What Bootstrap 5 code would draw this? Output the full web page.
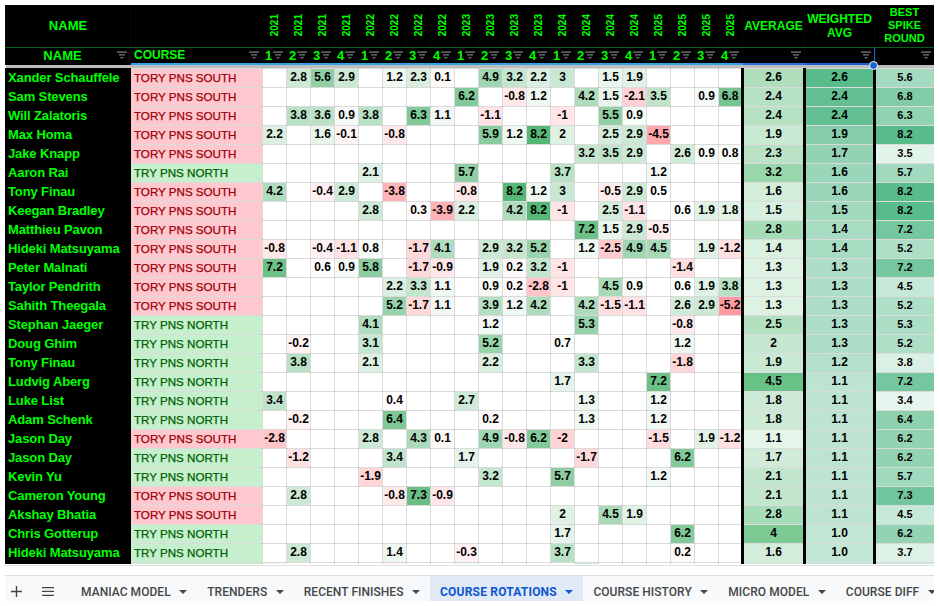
<!doctype html>
<html lang="en">
<head>
    <meta charset="utf-8" />
    <meta content="width=device-width, initial-scale=1" name="viewport" />
    <title>COURSE ROTATIONS</title>
    <link href="https://cdn.jsdelivr.net/npm/bootstrap@5.3.6/dist/css/bootstrap.min.css" rel="stylesheet" />
    <script src="https://cdn.jsdelivr.net/npm/bootstrap@5.3.6/dist/js/bootstrap.bundle.min.js"></script>
    <style>
        body {
            background-color: #fff;
            padding: 5px 5px 0;
            overflow: hidden;
            font-family: "Liberation Sans", Arial, sans-serif;
        }

        .sheet-wrap {
            width: 929px;
            height: 559px;
            overflow: hidden;
        }

        .sheet {
            width: 929px;
            table-layout: fixed;
            margin: 0;
        }

        .sheet > :not(caption) > * > * {
            padding: 0;
            box-shadow: none;
            background-color: transparent;
            color: #000;
            border: 1px solid #e0e0e0;
            text-align: center;
            vertical-align: middle;
            overflow: hidden;
            white-space: nowrap;
        }

        .sheet > thead > tr > * {
            background-color: #000;
            color: #0f0;
            font-weight: 700;
            border-color: #080808;
        }

        .sheet > thead > .head-top > * {
            height: 42px;
            font-size: 13px;
            line-height: 13px;
            border-top: 0;
            border-bottom: 1px solid #0a5c1e;
        }

        .sheet > thead > .head-top > .head-stat {
            font-size: 12px;
            line-height: 14px;
        }

        .sheet > thead > .head-top > .head-best {
            font-size: 11px;
            line-height: 13px;
        }

        .year-label {
            display: inline-block;
            writing-mode: vertical-rl;
            transform: rotate(180deg);
            font-size: 10px;
            line-height: 12px;
        }

        .sheet > thead > .head-filters > * {
            height: 17px;
            font-size: 13px;
            line-height: 15px;
            border-top-color: #0a5c1e;
            border-bottom: 2px solid #000;
        }

        .sheet > thead > .head-filters > .sel-line {
            border-bottom-color: #33a3e3;
        }

        .sheet > thead > .head-filters > .sel-avg {
            border-bottom-color: #2a72e0;
        }

        .sheet > thead > .head-filters > .sel-box {
            border: 1px solid #1a62d6;
            border-bottom-width: 2px;
        }

        .filter-cell {
            display: flex;
            align-items: center;
            justify-content: space-between;
            padding: 0 3px 0 2px;
        }

        .filter-name {
            flex-grow: 1;
            text-align: center;
        }

        .filter-course {
            font-size: 12px;
            padding-left: 1px;
        }

        .filter-icon {
            width: 10px;
            height: 8px;
            flex-shrink: 0;
            fill: #6f6f6f;
        }

        .sheet > thead > .freeze-bar > td {
            height: 4px;
            background-color: #bdbdbd;
            border: 0;
            line-height: 0;
            font-size: 0;
        }

        .sheet > tbody > tr > td {
            height: 19px;
            font-size: 12px;
            font-weight: 700;
            line-height: 17px;
            border-color: rgba(0, 0, 0, .14);
        }

        .sheet > tbody > tr > .player-name {
            background-color: #000;
            color: #0f0;
            font-size: 13px;
            letter-spacing: -.12px;
            text-align: left;
            padding-left: 2px;
            border-color: #000;
        }

        .sheet > tbody > tr > .course-south,
        .sheet > tbody > tr > .course-north {
            font-size: 11.6px;
            font-weight: 400;
            line-height: 18px;
            -webkit-text-stroke: .25px currentColor;
            text-align: left;
            padding: 0 0 0 3px;
        }

        .sheet > tbody > tr > .course-south {
            background-color: #ffc7ce;
            color: #9c0006;
        }

        .sheet > tbody > tr > .course-north {
            background-color: #c6efce;
            color: #006100;
        }

        .sheet > tbody > tr > .stat-left {
            border-left: 3px solid #000;
        }

        .sheet > tbody > tr > .stat-last {
            border-left: 3px solid #000;
            font-size: 11px;
        }

        .fill-handle {
            position: absolute;
            left: 864px;
            top: 56px;
            width: 9px;
            height: 9px;
            background-color: #1a62d6;
            border: 1px solid #fff;
            border-radius: 50%;
        }

        .sheet-line {
            width: 929px;
            height: 1px;
            background-color: #e0e0e0;
            margin-top: 1px;
        }

        .sheet-tabs {
            width: 929px;
            height: 26px;
            margin-top: 9px;
            background-color: #f8f9fa;
            border-top: 1px solid #dadce0;
            overflow: hidden;
            font-family: Roboto, "Liberation Sans", sans-serif;
            font-size: 12px;
            font-weight: 500;
            letter-spacing: .05px;
            color: #444746;
        }

        .tab-tool {
            flex-shrink: 0;
            width: 22px;
            padding-top: 6px;
            fill: #444746;
        }

        .tab-tool + .tab-tool {
            width: 32px;
            margin: 0 7px 0 5px;
        }

        .sheet-tab {
            padding: 6px 10px 0;
            flex-shrink: 0;
            gap: 8.5px;
        }

        .sheet-tab.is-active {
            background-color: #e1e9f7;
            color: #0b57d0;
            font-weight: 700;
            letter-spacing: .2px;
        }

        .tab-caret {
            width: 0;
            height: 0;
            border-left: 4px solid transparent;
            border-right: 4px solid transparent;
            border-top: 4px solid currentColor;
        }
    </style>
</head>
<body>

<svg class="d-none">
    <symbol id="flt" viewBox="0 0 10 8">
        <rect height="1.4" width="10" x="0" y="0.4"></rect>
        <rect height="1.4" width="6" x="2" y="3.2"></rect>
        <rect height="1.4" width="3" x="3.5" y="6"></rect>
    </symbol>
</svg>

<div class="position-relative">
    <div class="sheet-wrap">
        <table class="table sheet">
            <colgroup id="sheetCols"></colgroup>
            <thead id="sheetHead"></thead>
            <tbody id="sheetRows"></tbody>
        </table>
    </div>
    <div class="fill-handle"></div>
</div>

<div class="sheet-line"></div>

<div class="sheet-tabs d-flex align-items-stretch">
    <div class="tab-tool d-flex align-items-center justify-content-center">
        <svg height="11" viewBox="0 0 11 11" width="11"><path d="M4.8 0h1.4v4.8H11v1.4H6.2V11H4.8V6.2H0V4.8h4.8z"></path></svg>
    </div>
    <div class="tab-tool d-flex align-items-center justify-content-center">
        <svg height="9" viewBox="0 0 12 9" width="12"><path d="M0 0h12v1.3H0zM0 3.8h12v1.3H0zM0 7.7h12V9H0z"></path></svg>
    </div>
    <div class="d-flex align-items-stretch" id="sheetTabs"></div>
</div>

<script>
    // [name, course, {round column: value}, average, weighted, best spike]
    const S = "TORY PNS SOUTH", N = "TRY PNS NORTH";
    const players = [
        ["Xander Schauffele", S, {2: 2.8, 3: 5.6, 4: 2.9, 6: 1.2, 7: 2.3, 8: 0.1, 10: 4.9, 11: 3.2, 12: 2.2, 13: 3, 15: 1.5, 16: 1.9}, 2.6, "2.6", 5.6],
        ["Sam Stevens", S, {9: 6.2, 11: -0.8, 12: 1.2, 14: 4.2, 15: 1.5, 16: -2.1, 17: 3.5, 19: 0.9, 20: 6.8}, 2.4, "2.4", 6.8],
        ["Will Zalatoris", S, {2: 3.8, 3: 3.6, 4: 0.9, 5: 3.8, 7: 6.3, 8: 1.1, 10: -1.1, 13: -1, 15: 5.5, 16: 0.9}, 2.4, "2.4", 6.3],
        ["Max Homa", S, {1: 2.2, 3: 1.6, 4: -0.1, 6: -0.8, 10: 5.9, 11: 1.2, 12: 8.2, 13: 2, 15: 2.5, 16: 2.9, 17: -4.5}, 1.9, "1.9", 8.2],
        ["Jake Knapp", S, {14: 3.2, 15: 3.5, 16: 2.9, 18: 2.6, 19: 0.9, 20: 0.8}, 2.3, "1.7", 3.5],
        ["Aaron Rai", N, {5: 2.1, 9: 5.7, 13: 3.7, 17: 1.2}, 3.2, "1.6", 5.7],
        ["Tony Finau", S, {1: 4.2, 3: -0.4, 4: 2.9, 6: -3.8, 9: -0.8, 11: 8.2, 12: 1.2, 13: 3, 15: -0.5, 16: 2.9, 17: 0.5}, 1.6, "1.6", 8.2],
        ["Keegan Bradley", S, {5: 2.8, 7: 0.3, 8: -3.9, 9: 2.2, 11: 4.2, 12: 8.2, 13: -1, 15: 2.5, 16: -1.1, 18: 0.6, 19: 1.9, 20: 1.8}, 1.5, "1.5", 8.2],
        ["Matthieu Pavon", S, {14: 7.2, 15: 1.5, 16: 2.9, 17: -0.5}, 2.8, "1.4", 7.2],
        ["Hideki Matsuyama", S, {1: -0.8, 3: -0.4, 4: -1.1, 5: 0.8, 7: -1.7, 8: 4.1, 10: 2.9, 11: 3.2, 12: 5.2, 14: 1.2, 15: -2.5, 16: 4.9, 17: 4.5, 19: 1.9, 20: -1.2}, 1.4, "1.4", 5.2],
        ["Peter Malnati", S, {1: 7.2, 3: 0.6, 4: 0.9, 5: 5.8, 7: -1.7, 8: -0.9, 10: 1.9, 11: 0.2, 12: 3.2, 13: -1, 18: -1.4}, 1.3, "1.3", 7.2],
        ["Taylor Pendrith", S, {6: 2.2, 7: 3.3, 8: 1.1, 10: 0.9, 11: 0.2, 12: -2.8, 13: -1, 15: 4.5, 16: 0.9, 18: 0.6, 19: 1.9, 20: 3.8}, 1.3, "1.3", 4.5],
        ["Sahith Theegala", S, {6: 5.2, 7: -1.7, 8: 1.1, 10: 3.9, 11: 1.2, 12: 4.2, 14: 4.2, 15: -1.5, 16: -1.1, 18: 2.6, 19: 2.9, 20: -5.2}, 1.3, "1.3", 5.2],
        ["Stephan Jaeger", N, {5: 4.1, 10: 1.2, 14: 5.3, 18: -0.8}, 2.5, "1.3", 5.3],
        ["Doug Ghim", N, {2: -0.2, 5: 3.1, 10: 5.2, 13: 0.7, 18: 1.2}, 2, "1.3", 5.2],
        ["Tony Finau", N, {2: 3.8, 5: 2.1, 10: 2.2, 14: 3.3, 18: -1.8}, 1.9, "1.2", 3.8],
        ["Ludvig Aberg", N, {13: 1.7, 17: 7.2}, 4.5, "1.1", 7.2],
        ["Luke List", N, {1: 3.4, 6: 0.4, 9: 2.7, 14: 1.3, 17: 1.2}, 1.8, "1.1", 3.4],
        ["Adam Schenk", N, {2: -0.2, 6: 6.4, 10: 0.2, 14: 1.3, 17: 1.2}, 1.8, "1.1", 6.4],
        ["Jason Day", S, {1: -2.8, 5: 2.8, 7: 4.3, 8: 0.1, 10: 4.9, 11: -0.8, 12: 6.2, 13: -2, 17: -1.5, 19: 1.9, 20: -1.2}, 1.1, "1.1", 6.2],
        ["Jason Day", N, {2: -1.2, 6: 3.4, 9: 1.7, 14: -1.7, 18: 6.2}, 1.7, "1.1", 6.2],
        ["Kevin Yu", N, {5: -1.9, 10: 3.2, 13: 5.7, 17: 1.2}, 2.1, "1.1", 5.7],
        ["Cameron Young", S, {2: 2.8, 6: -0.8, 7: 7.3, 8: -0.9}, 2.1, "1.1", 7.3],
        ["Akshay Bhatia", S, {13: 2, 15: 4.5, 16: 1.9}, 2.8, "1.1", 4.5],
        ["Chris Gotterup", N, {13: 1.7, 18: 6.2}, 4, "1.0", 6.2],
        ["Hideki Matsuyama", N, {2: 2.8, 6: 1.4, 9: -0.3, 13: 3.7, 18: 0.2}, 1.6, "1.0", 3.7]
    ];

    function mix(to, t) {
        t = Math.max(0, Math.min(1, t));
        const c = to.map(v => Math.round(255 + (v - 255) * t));
        return `rgb(${c[0]},${c[1]},${c[2]})`;
    }

    const GREEN = [87, 187, 138];
    const roundColor = v => v >= 0.5 ? mix([87, 183, 118], (v - 0.5) / 7.7) : mix([255, 155, 160], (0.5 - v) / 5.7);
    const avgColor = v => mix([87, 187, 118], (v - 0.4) / 4.6);
    const weightedColor = v => mix(GREEN, 0.36 + (v - 1) / 1.6 * 0.64);
    const bestColor = v => mix(GREEN, 0.15 + (v - 3.4) / 4.8 * 0.85);

    const years = [2021, 2022, 2023, 2024, 2025];
    const icon = '<svg class="filter-icon"><use href="#flt"></use></svg>';

    // columns
    let cols = '<col style="width:125px"><col style="width:132px">';
    for (let i = 0; i < 20; i++) cols += '<col style="width:24px">';
    cols += '<col style="width:62px"><col style="width:70px"><col style="width:60px">';
    document.getElementById("sheetCols").innerHTML = cols;

    // header rows
    let topRow = '<th>NAME</th><th></th>';
    let filterRow = `<th><div class="filter-cell"><span class="filter-name">NAME</span>${icon}</div></th>` +
        `<th class="sel-line"><div class="filter-cell"><span class="filter-course">COURSE</span>${icon}</div></th>`;
    years.forEach(y => {
        for (let r = 1; r <= 4; r++) {
            topRow += `<th><span class="year-label">${y}</span></th>`;
            filterRow += `<th class="sel-line"><div class="filter-cell"><span>${r}</span>${icon}</div></th>`;
        }
    });
    topRow += '<th class="head-stat">AVERAGE</th><th class="head-stat">WEIGHTED<br>AVG</th><th class="head-best">BEST<br>SPIKE<br>ROUND</th>';
    filterRow += `<th class="sel-avg"><div class="filter-cell justify-content-end">${icon}</div></th>` +
        `<th class="sel-box"><div class="filter-cell justify-content-end">${icon}</div></th>` +
        `<th><div class="filter-cell justify-content-end">${icon}</div></th>`;
    document.getElementById("sheetHead").innerHTML =
        `<tr class="head-top">${topRow}</tr><tr class="head-filters">${filterRow}</tr>` +
        '<tr class="freeze-bar"><td colspan="25"></td></tr>';

    // player rows
    let rowsHtml = players.map(([name, course, rounds, avg, weighted, best]) => {
        let cells = `<td class="player-name">${name}</td>` +
            `<td class="${course === S ? "course-south" : "course-north"}">${course}</td>`;
        for (let c = 1; c <= 20; c++) {
            const v = rounds[c];
            cells += v === undefined ? "<td></td>" : `<td style="background-color:${roundColor(v)}">${v}</td>`;
        }
        cells += `<td class="stat-left" style="background-color:${avgColor(avg)}">${avg}</td>`;
        cells += `<td class="stat-left" style="background-color:${weightedColor(+weighted)}">${weighted}</td>`;
        cells += `<td class="stat-last" style="background-color:${bestColor(best)}">${best}</td>`;
        return `<tr>${cells}</tr>`;
    }).join("");

    // next row peeks in under the last one, only its fills show
    const peek = {1: -0.5, 6: -0.5, 9: 1.5, 14: 3};
    let peekCells = '<td class="player-name"></td><td class="course-north"></td>';
    for (let c = 1; c <= 20; c++) {
        peekCells += peek[c] === undefined ? "<td></td>" : `<td style="background-color:${roundColor(peek[c])}"></td>`;
    }
    peekCells += `<td class="stat-left" style="background-color:${avgColor(1.6)}"></td>` +
        `<td class="stat-left" style="background-color:${weightedColor(1)}"></td>` +
        `<td class="stat-last" style="background-color:${bestColor(4.2)}"></td>`;
    document.getElementById("sheetRows").innerHTML = rowsHtml + `<tr>${peekCells}</tr>`;

    // sheet tabs
    const tabs = ["MANIAC MODEL", "TRENDERS", "RECENT FINISHES", "COURSE ROTATIONS", "COURSE HISTORY", "MICRO MODEL", "COURSE DIFF"];
    document.getElementById("sheetTabs").innerHTML = tabs.map(t =>
        `<div class="sheet-tab d-flex align-items-center${t === "COURSE ROTATIONS" ? " is-active" : ""}">${t}<span class="tab-caret"></span></div>`
    ).join("");
</script>

</body>
</html>
